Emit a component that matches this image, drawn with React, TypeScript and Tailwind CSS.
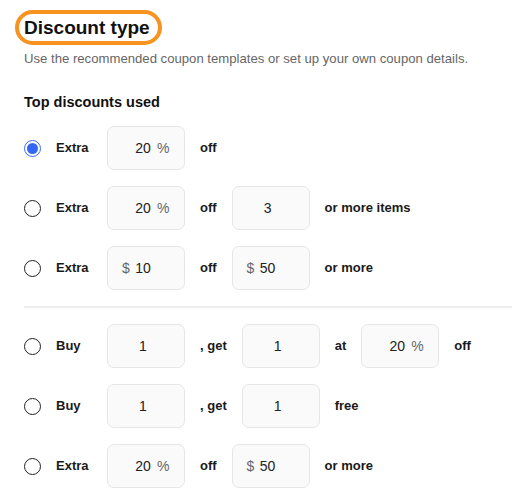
import React from "react";

function Radio({ checked }: { checked?: boolean }) {
  return checked ? (
    <span className="flex h-[17px] w-[17px] shrink-0 items-center justify-center rounded-full border border-[#3b6cf6] bg-white">
      <span className="h-[11px] w-[11px] rounded-full bg-[#3366f2]" />
    </span>
  ) : (
    <span className="h-[17px] w-[17px] shrink-0 rounded-full border border-[#222] bg-white" />
  );
}

function Field({ value, prefix, suffix }: { value: string; prefix?: string; suffix?: string }) {
  return (
    <div className="flex h-[44px] w-[78px] shrink-0 items-center rounded-[7px] border border-[#e6e6e6] bg-[#fafafa] pl-[14px] text-[14px]">
      <span className="w-[14px] text-[#666]">{prefix}</span>
      <span className="flex w-[14px] justify-center whitespace-nowrap text-[#222]">{value}</span>
      {suffix && <span className="ml-[7px] text-[#666]">{suffix}</span>}
    </div>
  );
}

function T({ children }: { children: React.ReactNode }) {
  return <span className="whitespace-nowrap text-[13px] font-bold text-[#1a1a1a]">{children}</span>;
}

function Row({ checked, label, children }: { checked?: boolean; label: string; children: React.ReactNode }) {
  return (
    <div className="flex h-[44px] items-center gap-[15px]">
      <Radio checked={checked} />
      <span className="w-[36px] text-[13px] font-bold text-[#1a1a1a]">{label}</span>
      {children}
    </div>
  );
}

export default function App() {
  return (
    <div
      className="h-[500px] w-[512px] overflow-hidden bg-white pl-[24px] pt-[10px]"
      style={{ fontFamily: '"Liberation Sans", Arial, sans-serif' }}
    >
      <div className="-ml-[9px] inline-flex h-[35px] items-center rounded-full border-[4px] border-[#f7931e] pl-[5px] pr-[8px]">
        <h1 className="text-[19px] font-bold leading-none text-[#111]">Discount type</h1>
      </div>
      <p className="mt-[6px] text-[13.15px] leading-[16px] text-[#666]">
        Use the recommended coupon templates or set up your own coupon details.
      </p>
      <h2 className="mt-[26px] text-[14.5px] font-bold leading-[18px] text-[#111]">Top discounts used</h2>
      <div className="mt-[15px] flex flex-col gap-[16px]">
        <Row checked label="Extra">
          <Field value="20" suffix="%" />
          <T>off</T>
        </Row>
        <Row label="Extra">
          <Field value="20" suffix="%" />
          <T>off</T>
          <Field value="3" />
          <T>or more items</T>
        </Row>
        <Row label="Extra">
          <Field value="10" prefix="$" />
          <T>off</T>
          <Field value="50" prefix="$" />
          <T>or more</T>
        </Row>
      </div>
      <div className="my-[16px] h-[2px] bg-[#ececec]" />
      <div className="flex flex-col gap-[16px]">
        <Row label="Buy">
          <Field value="1" />
          <T>, get</T>
          <Field value="1" />
          <T>at</T>
          <Field value="20" suffix="%" />
          <T>off</T>
        </Row>
        <Row label="Buy">
          <Field value="1" />
          <T>, get</T>
          <Field value="1" />
          <T>free</T>
        </Row>
        <Row label="Extra">
          <Field value="20" suffix="%" />
          <T>off</T>
          <Field value="50" prefix="$" />
          <T>or more</T>
        </Row>
      </div>
    </div>
  );
}
